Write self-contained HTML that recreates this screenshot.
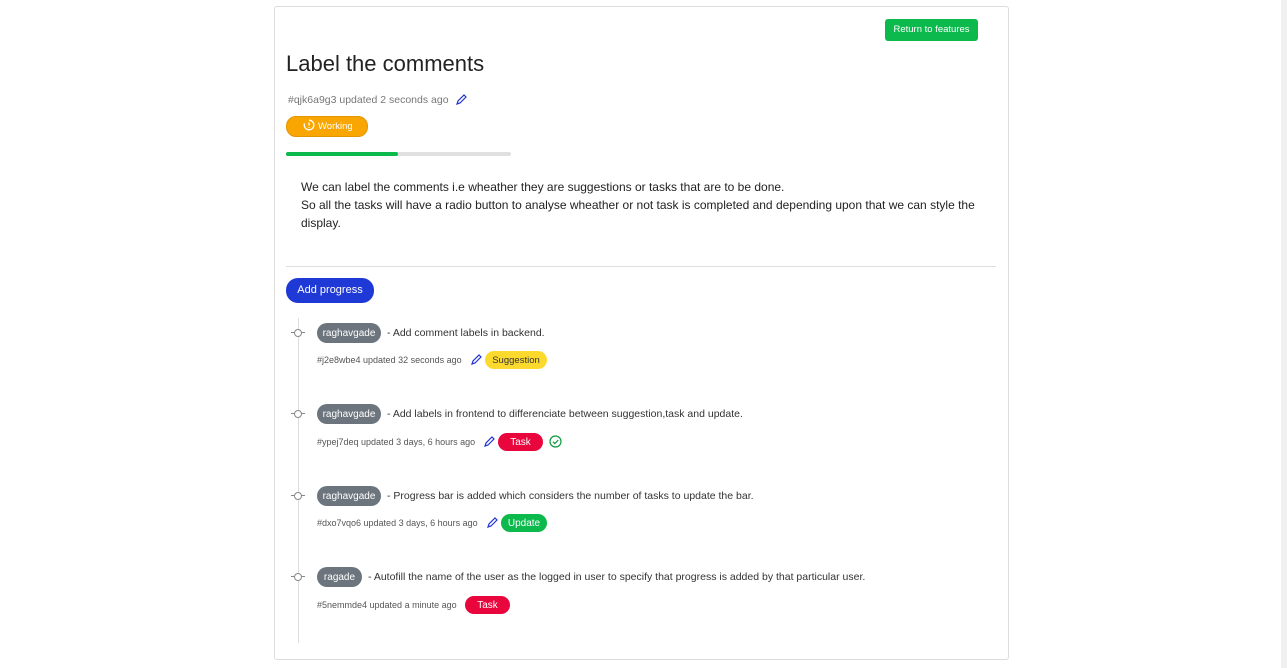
<!DOCTYPE html>
<html><head><style>
body{margin:0;width:1287px;height:668px;background:#fff;font-family:"Liberation Sans",sans-serif;position:relative;overflow:hidden;color:#333}
.a{position:absolute;white-space:nowrap}
.card{position:absolute;left:274px;top:6px;width:733px;height:652px;border:1px solid #dcdcdc;border-radius:3px}
.pill{position:absolute;border-radius:11px;font-size:10px;text-align:center;color:#fff;box-sizing:border-box;padding-top:1px}
.user{background:#6c757d;height:20px;line-height:20px}
.meta{font-size:9px;color:#555}
.txt{font-size:10.5px;color:#333}
.dot{position:absolute;left:294px;width:6px;height:6px;border:1px solid #888;border-radius:50%;background:#fff}
.dl{position:absolute;left:291px;width:14px;height:1px;background:#888}
</style></head><body>
<div class="a" style="left:1281px;top:0;width:6px;height:668px;background:#f0f0f0"></div>
<div class="card"></div>
<div class="a" style="left:885px;top:19px;width:93px;height:22px;background:#0bb94d;border-radius:3px;color:#fff;font-size:9.5px;line-height:22px;text-align:center">Return to features</div>
<div class="a" style="left:286px;top:51px;font-size:22px;color:#222">Label the comments</div>
<div class="a" style="left:288px;top:94px;font-size:10.5px;color:#777">#qjk6a9g3 updated 2 seconds ago</div>
<svg class="a" style="left:455px;top:94px" width="12" height="12" viewBox="0 0 12 12"><path d="M2 10l1-3 6-6 2 2-6 6z" fill="none" stroke="#2234d4" stroke-width="1.2"/></svg>
<div class="a" style="left:286px;top:116px;width:82px;height:21px;background:#f9a602;border:1px solid #e29500;border-radius:10px;box-sizing:border-box;color:#fff;font-size:9.5px;line-height:19px"><svg width="12" height="12" viewBox="0 0 12 12" style="margin:0 3px 0 16px;vertical-align:-2px"><path d="M6 1.2A4.8 4.8 0 1 1 1.5 4.5M6 10.8" fill="none" stroke="#fff" stroke-width="1.3"/><path d="M6 3.5v3M6 8v.8" stroke="#fff" stroke-width="1.3"/></svg>Working</div>
<div class="a" style="left:286px;top:152px;width:225px;height:4px;background:#e0e0e0;border-radius:2px"></div>
<div class="a" style="left:286px;top:152px;width:112px;height:4px;background:#0bb94d;border-radius:2px"></div>
<div class="a" style="left:301px;top:178px;font-size:12px;line-height:18px;white-space:normal;width:685px;color:#222">We can label the comments i.e wheather they are suggestions or tasks that are to be done.<br>So all the tasks will have a radio button to analyse wheather or not task is completed and depending upon that we can style the display.</div>
<div class="a" style="left:286px;top:266px;width:710px;height:1px;background:#ddd"></div>
<div class="a" style="left:286px;top:278px;width:88px;height:25px;background:#1f39d6;border-radius:12px;color:#fff;font-size:11px;line-height:25px;text-align:center">Add progress</div>
<div class="a" style="left:298px;top:318px;width:1px;height:325px;background:#ddd"></div>

<div class="dl" style="top:332px"></div><div class="dot" style="top:329px"></div>
<div class="pill user" style="left:317px;top:323px;width:64px">raghavgade</div>
<div class="a txt" style="left:387px;top:327px">- Add comment labels in backend.</div>
<div class="a meta" style="left:317px;top:355px">#j2e8wbe4 updated 32 seconds ago</div>
<svg class="a" style="left:470px;top:354px" width="12" height="12" viewBox="0 0 12 12"><path d="M2 10l1-3 6-6 2 2-6 6z" fill="none" stroke="#2234d4" stroke-width="1.2"/></svg>
<div class="pill" style="left:485px;top:351px;width:62px;height:18px;line-height:17px;background:#fbd92d;color:#333;font-size:9.5px">Suggestion</div>

<div class="dl" style="top:413px"></div><div class="dot" style="top:410px"></div>
<div class="pill user" style="left:317px;top:404px;width:64px">raghavgade</div>
<div class="a txt" style="left:387px;top:408px">- Add labels in frontend to differenciate between suggestion,task and update.</div>
<div class="a meta" style="left:317px;top:437px">#ypej7deq updated 3 days, 6 hours ago</div>
<svg class="a" style="left:483px;top:436px" width="12" height="12" viewBox="0 0 12 12"><path d="M2 10l1-3 6-6 2 2-6 6z" fill="none" stroke="#2234d4" stroke-width="1.2"/></svg>
<div class="pill" style="left:498px;top:433px;width:45px;height:18px;line-height:17px;background:#e8063c">Task</div>
<svg class="a" style="left:549px;top:435px" width="13" height="13" viewBox="0 0 13 13"><circle cx="6.5" cy="6.5" r="5.5" fill="none" stroke="#0a9a3a" stroke-width="1.2"/><path d="M4 6.8l1.8 1.8 3.4-3.6" fill="none" stroke="#0a9a3a" stroke-width="1.2"/></svg>

<div class="dl" style="top:495px"></div><div class="dot" style="top:492px"></div>
<div class="pill user" style="left:317px;top:486px;width:64px">raghavgade</div>
<div class="a txt" style="left:387px;top:490px">- Progress bar is added which considers the number of tasks to update the bar.</div>
<div class="a meta" style="left:317px;top:518px">#dxo7vqo6 updated 3 days, 6 hours ago</div>
<svg class="a" style="left:486px;top:517px" width="12" height="12" viewBox="0 0 12 12"><path d="M2 10l1-3 6-6 2 2-6 6z" fill="none" stroke="#2234d4" stroke-width="1.2"/></svg>
<div class="pill" style="left:501px;top:514px;width:46px;height:18px;line-height:17px;background:#0bb94d">Update</div>

<div class="dl" style="top:576px"></div><div class="dot" style="top:573px"></div>
<div class="pill user" style="left:317px;top:567px;width:45px">ragade</div>
<div class="a txt" style="left:368px;top:571px">- Autofill the name of the user as the logged in user to specify that progress is added by that particular user.</div>
<div class="a meta" style="left:317px;top:600px">#5nemmde4 updated a minute ago</div>
<div class="pill" style="left:465px;top:596px;width:45px;height:18px;line-height:17px;background:#e8063c">Task</div>
</body></html>
